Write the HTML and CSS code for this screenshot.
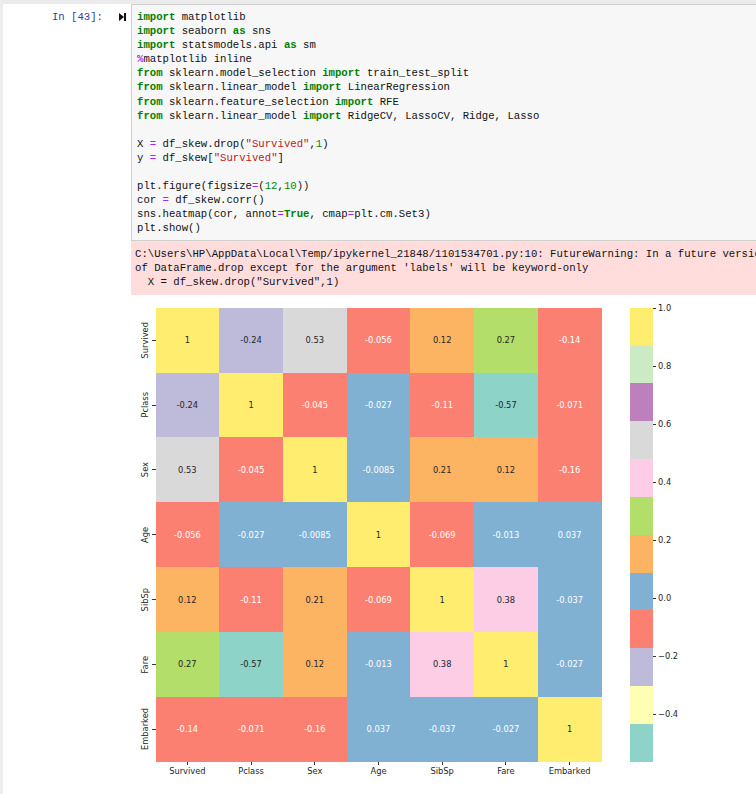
FILE: index.html
```html
<!DOCTYPE html>
<html>
<head>
<meta charset="utf-8">
<link rel="stylesheet" href="styles.css">
</head>
<body>
<div class="page">
  <div class="cell">
    <div class="prompt">
      <span class="prompt-text">In [43]:</span>
      <svg class="run-icon" width="7" height="8" viewBox="0 0 7 8"><path d="M0 0 L5 4 L0 8 Z" fill="#111"/><rect x="5" y="0" width="2" height="8" fill="#111"/></svg>
    </div>
    <div class="input"><pre class="code"><span class="kw">import</span> matplotlib
<span class="kw">import</span> seaborn <span class="kw">as</span> sns
<span class="kw">import</span> statsmodels.api <span class="kw">as</span> sm
<span class="mg">%</span>matplotlib inline
<span class="kw">from</span> sklearn.model_selection <span class="kw">import</span> train_test_split
<span class="kw">from</span> sklearn.linear_model <span class="kw">import</span> LinearRegression
<span class="kw">from</span> sklearn.feature_selection <span class="kw">import</span> RFE
<span class="kw">from</span> sklearn.linear_model <span class="kw">import</span> RidgeCV, LassoCV, Ridge, Lasso

X <span class="op">=</span> df_skew.drop(<span class="st">"Survived"</span>,<span class="nu">1</span>)
y <span class="op">=</span> df_skew[<span class="st">"Survived"</span>]

plt.figure(figsize<span class="op">=</span>(<span class="nu">12</span>,<span class="nu">10</span>))
cor <span class="op">=</span> df_skew.corr()
sns.heatmap(cor, annot<span class="op">=</span><span class="kw">True</span>, cmap<span class="op">=</span>plt.cm.Set3)
plt.show()</pre></div>
  </div>
  <div class="output">
    <pre class="stderr">C:\Users\HP\AppData\Local\Temp/ipykernel_21848/1101534701.py:10: FutureWarning: In a future version of pandas all arguments
of DataFrame.drop except for the argument 'labels' will be keyword-only
  X = df_skew.drop("Survived",1)</pre>
    <div class="figure">
      <div class="yaxis">
        <div class="ytick"><span class="ylabel">Survived</span><span class="ytickmark"></span></div>
        <div class="ytick"><span class="ylabel">Pclass</span><span class="ytickmark"></span></div>
        <div class="ytick"><span class="ylabel">Sex</span><span class="ytickmark"></span></div>
        <div class="ytick"><span class="ylabel">Age</span><span class="ytickmark"></span></div>
        <div class="ytick"><span class="ylabel">SibSp</span><span class="ytickmark"></span></div>
        <div class="ytick"><span class="ylabel">Fare</span><span class="ytickmark"></span></div>
        <div class="ytick"><span class="ylabel">Embarked</span><span class="ytickmark"></span></div>
      </div>
      <div class="plot">
        <div class="matrix">
          <div class="c yw">1</div><div class="c lv">-0.24</div><div class="c gr">0.53</div><div class="c sa">-0.056</div><div class="c or">0.12</div><div class="c gn">0.27</div><div class="c sa">-0.14</div>
          <div class="c lv">-0.24</div><div class="c yw">1</div><div class="c sa">-0.045</div><div class="c bl">-0.027</div><div class="c sa">-0.11</div><div class="c te">-0.57</div><div class="c sa">-0.071</div>
          <div class="c gr">0.53</div><div class="c sa">-0.045</div><div class="c yw">1</div><div class="c bl">-0.0085</div><div class="c or">0.21</div><div class="c or">0.12</div><div class="c sa">-0.16</div>
          <div class="c sa">-0.056</div><div class="c bl">-0.027</div><div class="c bl">-0.0085</div><div class="c yw">1</div><div class="c sa">-0.069</div><div class="c bl">-0.013</div><div class="c bl">0.037</div>
          <div class="c or">0.12</div><div class="c sa">-0.11</div><div class="c or">0.21</div><div class="c sa">-0.069</div><div class="c yw">1</div><div class="c pk">0.38</div><div class="c bl">-0.037</div>
          <div class="c gn">0.27</div><div class="c te">-0.57</div><div class="c or">0.12</div><div class="c bl">-0.013</div><div class="c pk">0.38</div><div class="c yw">1</div><div class="c bl">-0.027</div>
          <div class="c sa">-0.14</div><div class="c sa">-0.071</div><div class="c sa">-0.16</div><div class="c bl">0.037</div><div class="c bl">-0.037</div><div class="c bl">-0.027</div><div class="c yw">1</div>
        </div>
        <div class="xaxis">
          <div class="xtick"><span class="xtickmark"></span><span>Survived</span></div>
          <div class="xtick"><span class="xtickmark"></span><span>Pclass</span></div>
          <div class="xtick"><span class="xtickmark"></span><span>Sex</span></div>
          <div class="xtick"><span class="xtickmark"></span><span>Age</span></div>
          <div class="xtick"><span class="xtickmark"></span><span>SibSp</span></div>
          <div class="xtick"><span class="xtickmark"></span><span>Fare</span></div>
          <div class="xtick"><span class="xtickmark"></span><span>Embarked</span></div>
        </div>
      </div>
      <div class="cbar">
        <div class="cbar-strip">
          <div class="yw"></div><div class="lg"></div><div class="pu"></div><div class="gr"></div><div class="pk"></div><div class="gn"></div>
          <div class="or"></div><div class="bl"></div><div class="sa"></div><div class="lv"></div><div class="ly"></div><div class="te"></div>
        </div>
        <div class="cbar-axis">
          <div class="ctick"><span class="ctickmark"></span><span>1.0</span></div>
          <div class="ctick"><span class="ctickmark"></span><span>0.8</span></div>
          <div class="ctick"><span class="ctickmark"></span><span>0.6</span></div>
          <div class="ctick"><span class="ctickmark"></span><span>0.4</span></div>
          <div class="ctick"><span class="ctickmark"></span><span>0.2</span></div>
          <div class="ctick"><span class="ctickmark"></span><span>0.0</span></div>
          <div class="ctick"><span class="ctickmark"></span><span>−0.2</span></div>
          <div class="ctick"><span class="ctickmark"></span><span>−0.4</span></div>
        </div>
      </div>
    </div>
  </div>
</div>
</body>
</html>
```

FILE: styles.css
```css
html, body {
  margin: 0;
  padding: 0;
  background: #fff;
  overflow: hidden;
}

.page {
  border-top: 4px solid #ebebeb;
  border-left: 3px solid #eeeeee;
  min-height: 794px;
  box-sizing: border-box;
  width: 1100px;
}

.cell {
  display: flex;
  align-items: flex-start;
}

.prompt {
  width: 128px;
  flex: 0 0 128px;
  display: flex;
  justify-content: flex-end;
  align-items: center;
  gap: 16px;
  padding-top: 6px;
  padding-right: 5px;
  box-sizing: border-box;
  height: 20.1px;
}

.prompt-text {
  font-family: "Liberation Mono", monospace;
  font-size: 10.65px;
  line-height: 14.1px;
  color: #303f9f;
}

.run-icon {
  display: block;
  margin-top: -1px;
}

.input {
  width: 900px;
  flex: 0 0 900px;
  background: #f7f7f7;
  border: 1px solid #cfcfcf;
  border-right: none;
  padding: 5px 5px 4px 5px;
}

.code, .stderr {
  margin: 0;
  font-family: "Liberation Mono", monospace;
  font-size: 10.65px;
  line-height: 14.1px;
  color: #111;
  white-space: pre;
}

.kw { color: #008000; font-weight: bold; }
.mg { color: #aa22ff; font-weight: bold; }
.op { color: #aa22ff; }
.st { color: #ba2121; }
.nu { color: #008800; }

.output {
  margin-left: 128px;
}

.stderr {
  background: #ffdddd;
  padding: 6px 4px 6px 4px;
  width: 900px;
}

.figure {
  display: flex;
  align-items: flex-start;
  margin-top: 13px;
  margin-left: 7px;
  font-family: "DejaVu Sans", sans-serif;
  font-size: 8.3px;
  color: #262626;
}

.yaxis {
  display: flex;
  flex-direction: column;
  height: 454px;
}

.ytick {
  flex: 1;
  display: flex;
  align-items: center;
}

.ylabel {
  writing-mode: vertical-rl;
  transform: rotate(180deg);
  width: 14px;
  line-height: 14px;
  text-align: center;
}

.ytickmark {
  width: 3.5px;
  height: 1px;
  background: #333;
}

.plot {
  display: flex;
  flex-direction: column;
}

.matrix {
  display: grid;
  grid-template-columns: repeat(7, 1fr);
  grid-template-rows: repeat(7, 1fr);
  width: 446px;
  height: 454px;
}

.c {
  display: flex;
  align-items: center;
  justify-content: center;
  color: #262626;
  font-size: 8.3px;
}

.yw { background: #ffed6f; }
.lg { background: #ccebc5; }
.pu { background: #bc80bd; }
.gr { background: #d9d9d9; }
.pk { background: #fccde5; }
.gn { background: #b3de69; }
.or { background: #fdb462; }
.bl { background: #80b1d3; }
.sa { background: #fb8072; }
.lv { background: #bebada; }
.ly { background: #ffffb3; }
.te { background: #8dd3c7; }

.c.bl, .c.sa { color: #ffffff; }

.xaxis {
  display: grid;
  grid-template-columns: repeat(7, 1fr);
  width: 446px;
}

.xtick {
  display: flex;
  flex-direction: column;
  align-items: center;
  line-height: 10px;
}

.xtickmark {
  width: 1px;
  height: 3.5px;
  background: #333;
  margin-bottom: 1px;
}

.cbar {
  display: flex;
  align-items: flex-start;
  margin-left: 28px;
}

.cbar-strip {
  display: flex;
  flex-direction: column;
  width: 23px;
  height: 454px;
}

.cbar-strip div {
  flex: 1;
}

.cbar-axis {
  display: flex;
  flex-direction: column;
  margin-top: -6px;
}

.ctick {
  height: 58px;
  display: flex;
  align-items: flex-start;
  line-height: 12px;
}

.ctickmark {
  width: 3.5px;
  height: 1px;
  background: #333;
  margin-top: 6px;
  margin-right: 2px;
}
```
